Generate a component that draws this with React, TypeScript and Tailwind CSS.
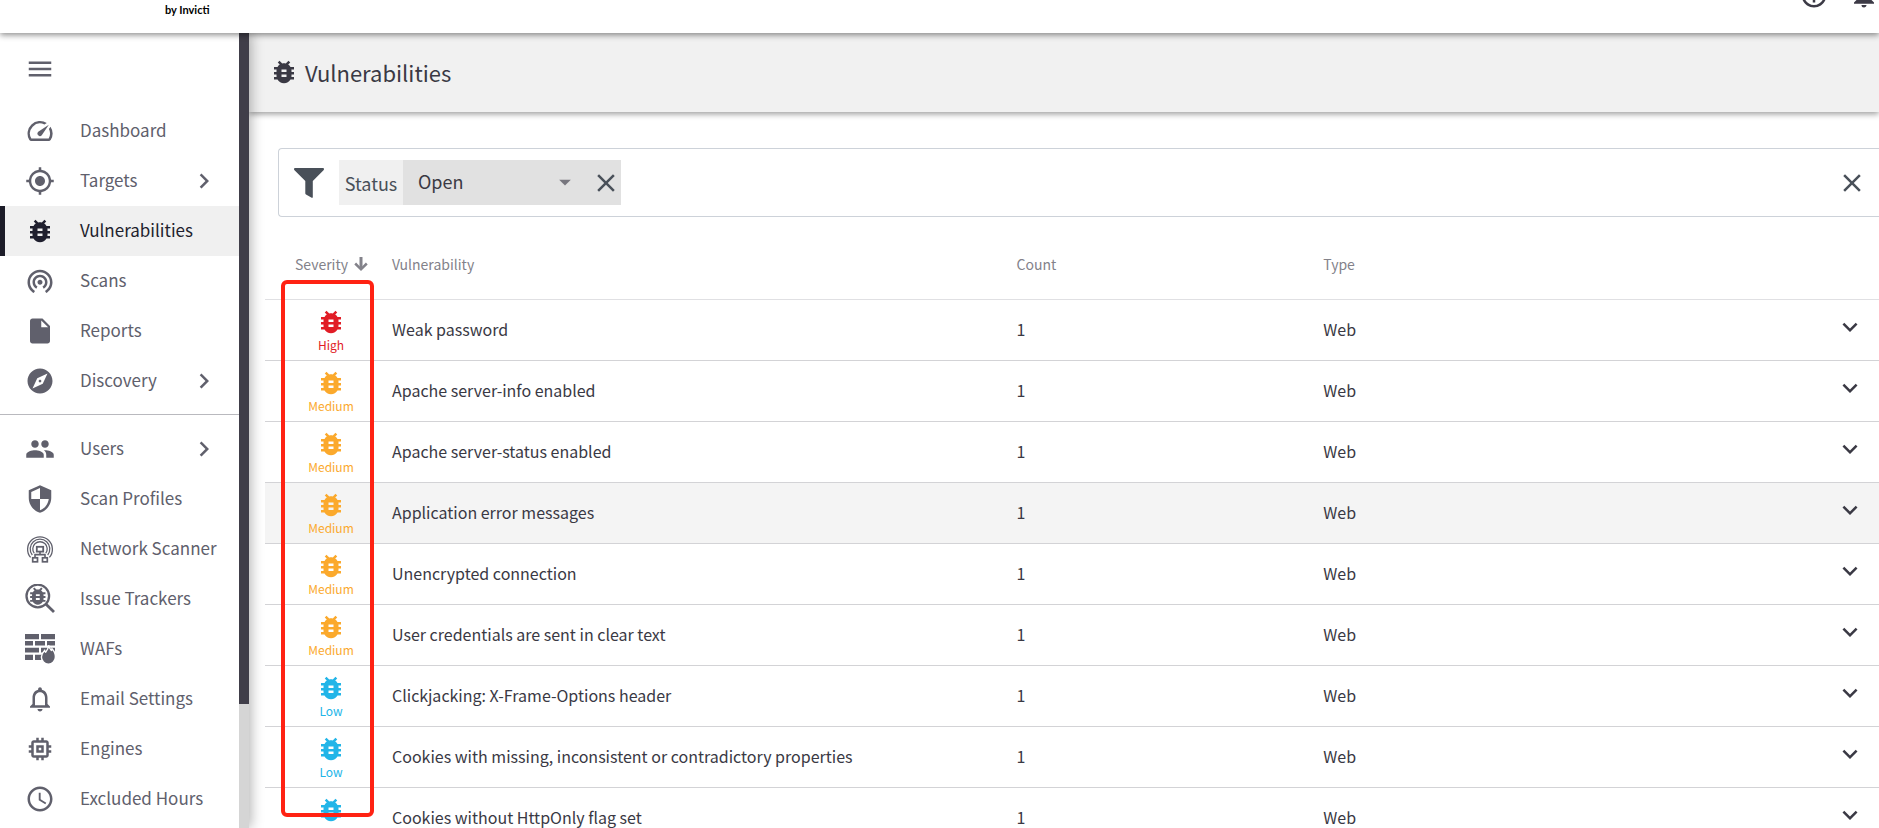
import type { ReactNode } from "react";
import {
  MdAccessTime,
  MdArrowDropDown,
  MdBugReport,
  MdChevronRight,
  MdClose,
  MdExpandMore,
  MdExplore,
  MdGpsFixed,
  MdHelpOutline,
  MdInsertDriveFile,
  MdMemory,
  MdMenu,
  MdNotifications,
  MdNotificationsNone,
  MdPeople,
  MdSecurity,
  MdSpeed,
  MdWifiTethering,
} from "react-icons/md";

type NavEntry = {
  label: string;
  icon: ReactNode;
  expandable?: boolean;
  active?: boolean;
};

type Severity = "High" | "Medium" | "Low";

type Finding = {
  name: string;
  severity: Severity;
  count: number;
  type: string;
  highlighted?: boolean;
};

function NetworkScannerIcon() {
  return (
    <svg viewBox="0 0 30 30" className="size-[30px]" fill="none" stroke="currentColor" aria-hidden="true">
      <path strokeWidth="1.3" d="M5.600 23.400A12.400 12.400 0 1 1 24.400 23.400" />
      <path strokeWidth="1.3" d="M7.300 21A9.800 9.800 0 1 1 22.700 21" />
      <path strokeWidth="1.3" d="M9.200 19.200A7.200 7.200 0 1 1 20.800 19.200" />
      <rect x="11.8" y="12.8" width="6.4" height="4.8" strokeWidth="1.8" />
      <path strokeWidth="1.6" d="M15 17.600V20.600M10 23.600V20.600H20V23.600" />
      <rect x="7.7" y="23.8" width="4.8" height="4" strokeWidth="1.7" />
      <rect x="17.5" y="23.8" width="4.8" height="4" strokeWidth="1.7" />
    </svg>
  );
}

function IssueTrackerIcon() {
  return (
    <svg viewBox="0 0 30 30" className="size-[30px]" aria-hidden="true">
      <circle cx="12.8" cy="12" r="11.3" fill="none" stroke="currentColor" strokeWidth="2.3" />
      <path d="M20.800 20L29 28" stroke="currentColor" strokeWidth="2.8" />
      <svg x="1.3" y="0.6" width="23" height="23" viewBox="0 0 24 24">
        <path
          fill="currentColor"
          d="M20 8h-2.81c-.45-.78-1.07-1.45-1.82-1.96L17 4.41 15.59 3l-2.17 2.17C12.96 5.06 12.49 5 12 5c-.49 0-.96.06-1.41.17L8.41 3 7 4.41l1.62 1.63C7.88 6.55 7.26 7.22 6.81 8H4v2h2.09c-.05.33-.09.66-.09 1v1H4v2h2v1c0 .34.04.67.09 1H4v2h2.81c1.04 1.79 2.97 3 5.19 3s4.15-1.21 5.19-3H20v-2h-2.09c.05-.33.09-.66.09-1v-1h2v-2h-2v-1c0-.34-.04-.67-.09-1H20V8zm-6 8h-4v-2h4v2zm0-4h-4v-2h4v2z"
        />
      </svg>
    </svg>
  );
}

function FirewallIcon() {
  return (
    <svg viewBox="0 0 30 30" className="size-[30px]" fill="currentColor" aria-hidden="true">
      <path d="M0 0h14v5.200H0zM16 0h14v5.200H16zM0 7h8v4.600H0zM10 7h10v4.600H10zM22 7h8v4.600h-8zM0 13.800h14v4.600H0zM16 13.800h14v4.600H16zM0 20.800h8V26H0zM10 20.800h10V26H10z" />
      <path
        stroke="#fff"
        strokeWidth="1.4"
        d="M23.600 11.200C24 13.800 25 15 26.400 16.400C26.900 16 27 15.400 27 14.800C29.200 17 30.400 20 30.400 23A7 7.200 0 0 1 16.400 23C16.400 20 18 18 19.600 16.400C19.800 17.200 20 17.800 20.600 18.200C22.200 16.400 23.400 14.200 23.600 11.200Z"
      />
    </svg>
  );
}

function FilterIcon() {
  return (
    <svg viewBox="0 0 30 30" className="size-[30px]" fill="currentColor" aria-hidden="true">
      <path d="M1 0H29Q30 0 30 1Q30 1.700 29.500 2.200L18.800 13V29Q18.800 30.200 17.700 29.700L12 26.500Q11.300 26 11.300 25.200V13L.5 2.200Q0 1.700 0 1Q0 0 1 0Z" />
    </svg>
  );
}

function SortDownIcon() {
  return (
    <svg viewBox="0 0 14 16" className="h-4 w-3.5" fill="none" stroke="currentColor" aria-hidden="true">
      <path strokeWidth="3" d="M7 1V13" />
      <path strokeWidth="2.5" d="M1.200 7.500L7 13.300L12.800 7.500" />
    </svg>
  );
}

const primaryNav: NavEntry[] = [
  { label: "Dashboard", icon: <MdSpeed /> },
  { label: "Targets", icon: <MdGpsFixed />, expandable: true },
  { label: "Vulnerabilities", icon: <MdBugReport />, active: true },
  { label: "Scans", icon: <MdWifiTethering /> },
  { label: "Reports", icon: <MdInsertDriveFile /> },
  { label: "Discovery", icon: <MdExplore />, expandable: true },
];

const settingsNav: NavEntry[] = [
  { label: "Users", icon: <MdPeople />, expandable: true },
  { label: "Scan Profiles", icon: <MdSecurity /> },
  { label: "Network Scanner", icon: <NetworkScannerIcon /> },
  { label: "Issue Trackers", icon: <IssueTrackerIcon /> },
  { label: "WAFs", icon: <FirewallIcon /> },
  { label: "Email Settings", icon: <MdNotificationsNone /> },
  { label: "Engines", icon: <MdMemory /> },
  { label: "Excluded Hours", icon: <MdAccessTime /> },
];

const findings: Finding[] = [
  { name: "Weak password", severity: "High", count: 1, type: "Web" },
  { name: "Apache server-info enabled", severity: "Medium", count: 1, type: "Web" },
  { name: "Apache server-status enabled", severity: "Medium", count: 1, type: "Web" },
  { name: "Application error messages", severity: "Medium", count: 1, type: "Web", highlighted: true },
  { name: "Unencrypted connection", severity: "Medium", count: 1, type: "Web" },
  { name: "User credentials are sent in clear text", severity: "Medium", count: 1, type: "Web" },
  { name: "Clickjacking: X-Frame-Options header", severity: "Low", count: 1, type: "Web" },
  { name: "Cookies with missing, inconsistent or contradictory properties", severity: "Low", count: 1, type: "Web" },
  { name: "Cookies without HttpOnly flag set", severity: "Low", count: 1, type: "Web" },
];

const severityColor: Record<Severity, string> = {
  High: "text-[#e11d26]",
  Medium: "text-[#fba92c]",
  Low: "text-[#22b5e8]",
};

function NavList({ entries }: { entries: NavEntry[] }) {
  return (
    <ul>
      {entries.map((entry) => (
        <li key={entry.label}>
          <a
            href="#"
            aria-current={entry.active ? "page" : undefined}
            className={
              entry.active
                ? "flex h-[50px] items-center border-l-[5px] border-[#1c1c28] bg-[#f0f0f0] pr-5 pl-5 text-[#1f1f2e]"
                : "flex h-[50px] items-center pr-5 pl-[25px] text-[#60606c]"
            }
          >
            <span className="shrink-0 text-3xl">{entry.icon}</span>
            <span className="ml-[25px] flex-1 pb-0.5 text-[17px] leading-6 whitespace-nowrap">{entry.label}</span>
            {entry.expandable && <MdChevronRight className="size-[30px] shrink-0" />}
          </a>
        </li>
      ))}
    </ul>
  );
}

function TopBar() {
  return (
    <header className="relative z-20 flex h-[33px] shrink-0 items-end justify-between overflow-hidden bg-white shadow-[0_2px_6px_rgba(0,0,0,0.45)]">
      <span className="ml-[165px] pb-[17px] font-['Lato','Liberation_Sans',sans-serif] text-[11px] leading-3 font-bold text-black">
        by Invicti
      </span>
      <div className="flex gap-5 pb-[23px] text-3xl text-[#3c3a46]">
        <button type="button" aria-label="Help">
          <MdHelpOutline />
        </button>
        <button type="button" aria-label="Notifications">
          <MdNotifications />
        </button>
      </div>
    </header>
  );
}

function Sidebar() {
  return (
    <div className="relative z-10 flex w-[249px] shrink-0 bg-white shadow-[2px_0_12px_rgba(0,0,0,0.3)]">
      <nav aria-label="Main" className="min-w-0 flex-1 overflow-hidden">
        <button type="button" aria-label="Toggle menu" className="mt-[21px] mb-[22px] ml-[25px] block text-3xl text-[#60606c]">
          <MdMenu />
        </button>
        <NavList entries={primaryNav} />
        <hr className="mt-2 mb-[9px] border-[#b9b9be]" />
        <NavList entries={settingsNav} />
      </nav>
      <div className="w-2.5 shrink-0 bg-[#d5d5d5]">
        <div className="h-[84.4%] bg-[#403e49]" />
      </div>
    </div>
  );
}

function FilterBar() {
  return (
    <div className="mt-9 ml-[29px] flex h-[69px] items-center rounded-l border border-r-0 border-[#cdd2d9] pr-3 pl-[15px] text-[#495059]">
      <FilterIcon />
      <div className="ml-[15px] flex h-[45px] items-center bg-[#e1e1e1]">
        <label htmlFor="status" className="flex h-full w-16 items-center justify-center bg-[#f0f0f0] text-lg">
          Status
        </label>
        <div className="relative flex h-full items-center text-[#3a3944]">
          <select id="status" className="h-full w-[188px] appearance-none bg-transparent pb-1 pl-[15px] text-lg outline-none">
            <option>Open</option>
          </select>
          <MdArrowDropDown className="pointer-events-none absolute top-2 right-3 size-7 text-[#77767e]" />
        </div>
        <button type="button" aria-label="Remove status filter" className="text-3xl text-[#495059]">
          <MdClose />
        </button>
      </div>
      <button type="button" aria-label="Clear filters" className="ml-auto text-3xl">
        <MdClose />
      </button>
    </div>
  );
}

function FindingsTable() {
  return (
    <div className="relative mt-5 ml-4">
      <table className="w-full table-fixed border-collapse text-left">
        <thead>
          <tr className="h-[62px] border-b border-[#e0e0e3] text-sm text-[#83828a]">
            <th scope="col" className="w-[127px] pb-[7px] pl-[30px] font-normal">
              <button type="button" className="flex items-center gap-1.5">
                Severity
                <SortDownIcon />
              </button>
            </th>
            <th scope="col" className="w-[38.7%] pb-[7px] font-normal">Vulnerability</th>
            <th scope="col" className="w-[19%] pb-[7px] font-normal">Count</th>
            <th scope="col" className="pb-[7px] font-normal">Type</th>
            <td className="w-11" />
          </tr>
        </thead>
        <tbody>
          {findings.map((finding) => (
            <tr
              key={finding.name}
              className={
                finding.highlighted
                  ? "h-[61px] border-b border-[#d3d3d6] bg-[#f4f4f4] text-base text-[#3a3944]"
                  : "h-[61px] border-b border-[#d3d3d6] text-base text-[#3a3944]"
              }
            >
              <td className="pl-[5px]">
                <div className={severityColor[finding.severity]}>
                  <MdBugReport className="mx-auto size-[30px]" />
                  <div className="text-center text-xs leading-4">{finding.severity}</div>
                </div>
              </td>
              <td className="pb-0.5 whitespace-nowrap">{finding.name}</td>
              <td className="pb-0.5">{finding.count}</td>
              <td className="pb-0.5">{finding.type}</td>
              <td>
                <button type="button" aria-label={`Expand ${finding.name}`} className="block pb-1.5 text-3xl">
                  <MdExpandMore />
                </button>
              </td>
            </tr>
          ))}
        </tbody>
      </table>
      <div className="pointer-events-none absolute top-[43px] left-4 h-[537px] w-[93px] rounded-md border-4 border-[#ff2213]" />
    </div>
  );
}

export default function App() {
  return (
    <div className="flex h-screen flex-col overflow-hidden bg-white font-['Noto_Sans_CJK_SC',sans-serif]">
      <TopBar />
      <div className="flex min-h-0 flex-1">
        <Sidebar />
        <main className="min-w-0 flex-1 overflow-hidden">
          <div className="flex h-[79px] items-center bg-[#f1f1f1] pb-0.5 pl-5 text-[#3a3944] shadow-[0_2px_6px_rgba(0,0,0,0.4)]">
            <MdBugReport className="size-[30px]" />
            <h1 className="ml-1.5 text-[22px] leading-8">Vulnerabilities</h1>
          </div>
          <FilterBar />
          <FindingsTable />
        </main>
      </div>
    </div>
  );
}
